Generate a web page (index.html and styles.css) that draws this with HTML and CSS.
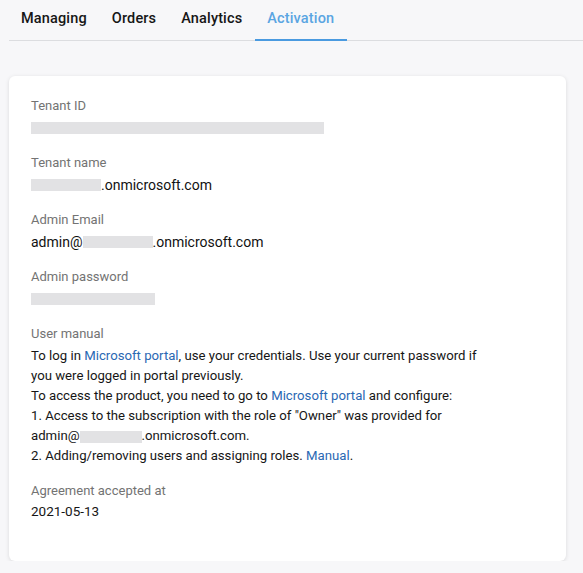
FILE: index.html
```html
<!DOCTYPE html>
<html lang="en">
<head>
<meta charset="utf-8">
<title>Activation</title>
<link rel="stylesheet" href="styles.css">
</head>
<body>
  <nav class="tabs">
    <a class="tab">Managing</a>
    <a class="tab">Orders</a>
    <a class="tab">Analytics</a>
    <a class="tab tab-active">Activation</a>
  </nav>

  <section class="card">
    <div class="field">
      <div class="label">Tenant ID</div>
      <div class="value"><span class="mask mask-id"></span></div>
    </div>

    <div class="field">
      <div class="label">Tenant name</div>
      <div class="value"><span class="mask mask-domain"></span>.onmicrosoft.com</div>
    </div>

    <div class="field">
      <div class="label">Admin Email</div>
      <div class="value">admin@<span class="mask mask-domain"></span>.onmicrosoft.com</div>
    </div>

    <div class="field">
      <div class="label">Admin password</div>
      <div class="value"><span class="mask mask-pass"></span></div>
    </div>

    <div class="field">
      <div class="label">User manual</div>
      <div class="manual">
        To log in <a class="link">Microsoft portal</a>, use your credentials. Use your current password if you were logged in portal previously.<br>
        To access the product, you need to go to <a class="link">Microsoft portal</a> and configure:<br>
        1. Access to the subscription with the role of "Owner" was provided for <span class="email">admin@<span class="mask mask-inline"></span>.onmicrosoft.com.</span><br>
        2. Adding/removing users and assigning roles. <a class="link">Manual</a>.
      </div>
    </div>

    <div class="field">
      <div class="label">Agreement accepted at</div>
      <div class="manual manual-date">2021-05-13</div>
    </div>
  </section>
</body>
</html>
```

FILE: styles.css
```css
html, body {
  margin: 0;
  padding: 0;
}

body {
  background: #f7f7f9;
  font-family: Roboto, "Liberation Sans", sans-serif;
  color: #161616;
  padding: 0 0 0 9px;
}

/* tab strip */
.tabs {
  display: flex;
  height: 40px;
  border-bottom: 1px solid #dcdde0;
}

.tab {
  display: block;
  padding: 0 12.5px;
  line-height: 37px;
  font-size: 14.5px;
  letter-spacing: 0.15px;
  font-weight: 500;
  color: #161616;
  border-bottom: 2px solid transparent;
  margin-bottom: -1px;
}

.tab:first-child {
  padding-left: 12px;
}

.tab-active {
  color: #5aa5e2;
  border-bottom-color: #4a9ae0;
}

/* activation card */
.card {
  margin: 35px 17px 0 0;
  background: #fff;
  border-radius: 6px;
  box-shadow: 0 1px 4px rgba(0, 0, 0, 0.12);
  padding: 22px 22px 41px;
}

.field + .field {
  margin-top: 17px;
}

.label {
  font-size: 13px;
  line-height: 16px;
  color: #737373;
  margin-bottom: 4px;
}

.value {
  font-size: 14px;
  line-height: 20px;
  min-height: 20px;
  color: #111;
  display: flex;
  align-items: center;
}

.mask {
  display: inline-block;
  height: 12px;
  background: #e2e2e4;
  vertical-align: middle;
}

.mask-id { width: 293px; }
.mask-domain { width: 70px; }
.mask-pass { width: 124px; }
.mask-inline { width: 62px; }

.manual {
  font-size: 13.2px;
  line-height: 20px;
  max-width: 460px;
  color: #161616;
}

.email {
  white-space: nowrap;
}

.manual-date {
  font-size: 13.5px;
  line-height: 17px;
}

.link {
  color: #2a68b3;
}
```
